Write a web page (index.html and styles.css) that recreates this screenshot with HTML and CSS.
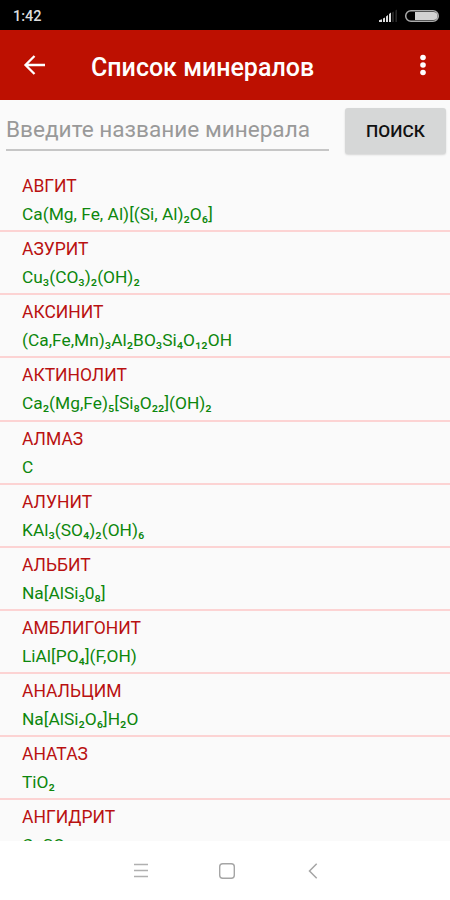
FILE: index.html
```html
<!DOCTYPE html>
<html lang="ru">
<head>
    <meta charset="UTF-8">
    <meta name="viewport" content="width=device-width, initial-scale=1.0">
    <title>Список минералов</title>
    <link rel="stylesheet" href="styles.css">
</head>
<body>
    <div class="status-bar">
        <span class="time">1:42</span>
        <svg class="signal" width="20" height="14" viewBox="0 0 20 14">
            <path d="M1 13V11.2L4 10.2V13Z M5 13V9.5L7 8.5V13Z M8 13V7.5L10 6V13Z M11 13V5L13 3.5V13Z" fill="#ddd"/>
            <path d="M14.2 13V3.5L15.7 2.5V13Z M17.5 13V1.5L18.8 0.5V13Z" fill="#333"/>
        </svg>
        <svg class="battery" width="36" height="14" viewBox="0 0 36 14">
            <rect x="1.7" y="1.7" width="32.6" height="10.6" rx="5.3" fill="none" stroke="#aaa" stroke-width="1.5"/>
            <path d="M11 3H29.5A4 4 0 0 1 29.5 11H11Z" fill="#d2d2d2"/>
        </svg>
    </div>

    <header class="toolbar">
        <svg class="back" width="24" height="24" viewBox="0 0 24 24">
            <path d="M22 12H3M11.5 3L2.5 12L11.5 21" fill="none" stroke="#fff" stroke-width="2.3"/>
        </svg>
        <h1>Список минералов</h1>
        <svg class="more" width="8" height="24" viewBox="0 0 8 24">
            <circle cx="4" cy="4.5" r="2.8" fill="#fff"/>
            <circle cx="4" cy="12" r="2.8" fill="#fff"/>
            <circle cx="4" cy="19.5" r="2.8" fill="#fff"/>
        </svg>
    </header>

    <div class="search">
        <input type="text" id="mineralName" placeholder="Введите название минерала">
        <button>ПОИСК</button>
    </div>

    <ul class="minerals">
        <li><h2>АВГИТ</h2><p>Ca(Mg, Fe, Al)[(Si, Al)₂O₆]</p></li>
        <li><h2>АЗУРИТ</h2><p>Cu₃(CO₃)₂(OH)₂</p></li>
        <li><h2>АКСИНИТ</h2><p>(Ca,Fe,Mn)₃Al₂BO₃Si₄O₁₂OH</p></li>
        <li><h2>АКТИНОЛИТ</h2><p>Ca₂(Mg,Fe)₅[Si₈O₂₂](OH)₂</p></li>
        <li><h2>АЛМАЗ</h2><p>C</p></li>
        <li><h2>АЛУНИТ</h2><p>KAl₃(SO₄)₂(OH)₆</p></li>
        <li><h2>АЛЬБИТ</h2><p>Na[AlSi₃0₈]</p></li>
        <li><h2>АМБЛИГОНИТ</h2><p>LiAl[PO₄](F,OH)</p></li>
        <li><h2>АНАЛЬЦИМ</h2><p>Na[AlSi₂O₆]H₂O</p></li>
        <li><h2>АНАТАЗ</h2><p>TiO₂</p></li>
        <li><h2>АНГИДРИТ</h2><p>CaSO₄</p></li>
    </ul>

    <nav class="nav-bar">
        <svg width="18" height="18" viewBox="0 0 18 18">
            <path d="M2 2.5H16M2 8.5H16M2 14.5H16" stroke="#b0b0b0" stroke-width="1.5"/>
        </svg>
        <svg width="18" height="18" viewBox="0 0 18 18">
            <rect x="1.7" y="1.7" width="14.6" height="14.6" rx="3" fill="none" stroke="#a5a5a5" stroke-width="1.4"/>
        </svg>
        <svg width="18" height="18" viewBox="0 0 18 18">
            <path d="M12.7 1.8L5.5 9L12.7 16.200" fill="none" stroke="#a5a5a5" stroke-width="1.5"/>
        </svg>
    </nav>
</body>
</html>
```

FILE: styles.css
```css
* {
    box-sizing: border-box;
}
body {
    display: flex;
    flex-direction: column;
    height: 900px;
    margin: 0;
    overflow: hidden;
    font-family: Roboto, sans-serif;
    background-color: #fafafa;
}
.status-bar {
    display: flex;
    align-items: center;
    flex: none;
    height: 30px;
    padding: 2px 10px 0 13px;
    background-color: #000;
}
.time {
    flex: 1;
    font-size: 14.5px;
    font-weight: 500;
    color: #ddd;
}
.signal {
    margin-right: 6px;
}
.toolbar {
    display: flex;
    align-items: center;
    flex: none;
    height: 70px;
    padding: 0 23px;
    background-color: #bd1001;
    color: #fff;
}
h1 {
    flex: 1;
    margin: 4px 0 0 44px;
    font-size: 25px;
    font-weight: 500;
}
.search {
    display: flex;
    flex: none;
    height: 69px;
    padding: 8px 4px 0 6px;
}
input {
    width: 323px;
    height: 43px;
    margin-right: 16px;
    padding: 2px 0 0;
    border: none;
    border-bottom: 2px solid #c6c6c6;
    background: none;
    font: 22.6px Roboto, sans-serif;
}
input::placeholder {
    color: #999;
}
button {
    width: 101px;
    height: 46px;
    padding: 0;
    border: none;
    border-radius: 3px;
    background-color: #d6d7d7;
    box-shadow: 0 1px 2px rgba(0, 0, 0, 0.15);
    font: 500 17.3px Roboto, sans-serif;
    color: #111;
}
.minerals {
    flex: 1;
    min-height: 0;
    margin: 0;
    padding: 0;
    overflow: hidden;
    list-style: none;
}
.minerals li {
    height: 63.15px;
    padding: 5px 22px 0;
    border-bottom: 2px solid #fcd3d3;
}
h2, p {
    margin: 0;
    font-size: 17.5px;
    font-weight: 400;
    line-height: 24px;
}
h2 {
    margin-bottom: 4px;
    color: #b91111;
}
p {
    font-size: 17.35px;
    color: #0d870d;
}
.nav-bar {
    display: flex;
    align-items: center;
    justify-content: center;
    gap: 68px;
    flex: none;
    height: 59px;
    padding-left: 3px;
    background-color: #fff;
}
```
